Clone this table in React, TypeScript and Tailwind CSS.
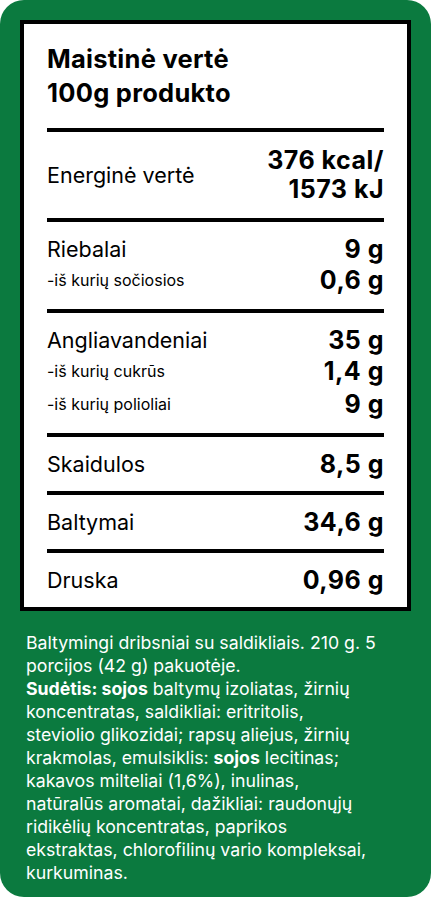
import { JSX } from 'react'

type Row = { label: string; value: string; sub?: boolean }

const sections: Row[][] = [
  [
    { label: 'Riebalai', value: '9 g' },
    { label: '-iš kurių sočiosios', value: '0,6 g', sub: true },
  ],
  [
    { label: 'Angliavandeniai', value: '35 g' },
    { label: '-iš kurių cukrūs', value: '1,4 g', sub: true },
    { label: '-iš kurių polioliai', value: '9 g', sub: true },
  ],
  [{ label: 'Skaidulos', value: '8,5 g' }],
  [{ label: 'Baltymai', value: '34,6 g' }],
  [{ label: 'Druska', value: '0,96 g' }],
]

function Divider(): JSX.Element {
  return <div className="h-[4px] bg-black" />
}

function NutrientRow({ label, value, sub }: Row): JSX.Element {
  return (
    <div className={`flex items-center justify-between ${sub ? 'leading-[33px]' : 'leading-[30px]'}`}>
      <span className={sub ? 'text-[16px]' : 'text-[21.5px]'}>{label}</span>
      <span className="text-[25px] font-bold tracking-[0.02em]">{value}</span>
    </div>
  )
}

export default function App(): JSX.Element {
  return (
    <div className="w-[431px] bg-white" style={{ fontFamily: 'Inter, "Noto Sans", sans-serif' }}>
      <div className="bg-[#0b7a3f] rounded-[24px] p-5 pb-[13px]">
        <div className="bg-white border-4 border-black px-[23px] text-black">
          <div className="pt-[18px] pb-[18px] text-[25.5px] font-bold leading-[34px] tracking-[0.01em]">
            <p>Maistinė vertė</p>
            <p>100g produkto</p>
          </div>
          <Divider />
          <div className="flex items-center justify-between py-[14px]">
            <span className="text-[21.5px]">Energinė vertė</span>
            <div className="text-right text-[25px] font-bold leading-[29px] tracking-[0.02em]">
              <p>376 kcal/</p>
              <p>1573 kJ</p>
            </div>
          </div>
          {sections.map((rows, i) => (
            <div key={i}>
              <Divider />
              <div className="py-3">
                {rows.map((r) => (
                  <NutrientRow key={r.label} {...r} />
                ))}
              </div>
            </div>
          ))}
        </div>

        <p className="mt-5 px-[6px] text-[17.7px] leading-[23px] text-white">
          Baltymingi dribsniai su saldikliais. 210 g. 5<br />
          porcijos (42 g) pakuotėje.<br />
          <b>Sudėtis: sojos</b> baltymų izoliatas, žirnių<br />
          koncentratas, saldikliai: eritritolis,<br />
          steviolio glikozidai; rapsų aliejus, žirnių<br />
          krakmolas, emulsiklis: <b>sojos</b> lecitinas;<br />
          kakavos milteliai (1,6%), inulinas,<br />
          natūralūs aromatai, dažikliai: raudonųjų<br />
          ridikėlių koncentratas, paprikos<br />
          ekstraktas, chlorofilinų vario kompleksai,<br />
          kurkuminas.
        </p>
      </div>
    </div>
  )
}
